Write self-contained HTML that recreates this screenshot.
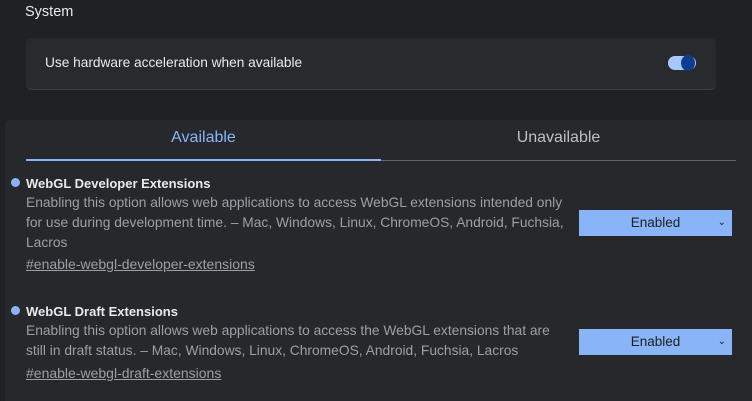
<!DOCTYPE html>
<html><head><style>
body{margin:0;width:752px;height:401px;background:#202124;font-family:"Liberation Sans",sans-serif;overflow:hidden;position:relative;color:#e8eaed}
.a{position:absolute}
.desc{color:#9aa0a6;font-size:13.8px;line-height:20px;white-space:nowrap}
.link{color:#9aa0a6;font-size:14px;text-decoration:underline}
.title{font-size:13px;font-weight:bold;color:#e8eaed}
.dot{width:9px;height:9px;border-radius:50%;background:#8ab4f8}
.sel{background:#8ab4f8;color:#202124;font-size:13.5px;width:153px;height:26px;line-height:26px;text-align:center}
.sel span{position:absolute;right:6px;top:0;font-size:10px}
</style></head><body>
<div class="a" style="left:25px;top:4px;font-size:14.5px">System</div>
<div class="a" style="left:26px;top:38px;width:690px;height:51px;background:#292a2d;border-radius:6px;border-bottom:1px solid #3c4043"></div>
<div class="a" style="left:45px;top:55px;font-size:13.7px">Use hardware acceleration when available</div>
<div class="a" style="left:668px;top:56px;width:28px;height:14px;border-radius:8px;background:#a8c7fa"></div>
<div class="a" style="left:681px;top:55px;width:14px;height:16px;border-radius:50%;background:#0b3d91"></div>
<div class="a" style="left:5px;top:120px;width:747px;height:281px;background:#27282b;border-radius:6px 0 0 0"></div>
<div class="a" style="left:26px;top:129px;width:355px;text-align:center;font-size:16px;color:#8ab4f8">Available</div>
<div class="a" style="left:381px;top:129px;width:355px;text-align:center;font-size:16px;color:#bdc1c6">Unavailable</div>
<div class="a" style="left:26px;top:159px;width:355px;height:2px;background:#8ab4f8"></div>
<div class="a" style="left:381px;top:160px;width:355px;height:1px;background:#5f6368"></div>

<div class="a dot" style="left:11px;top:178px"></div>
<div class="a title" style="left:26px;top:176px">WebGL Developer Extensions</div>
<div class="a desc" style="left:26px;top:193px">Enabling this option allows web applications to access WebGL extensions intended only<br>for use during development time. – Mac, Windows, Linux, ChromeOS, Android, Fuchsia,<br>Lacros</div>
<div class="a link" style="left:26px;top:256px">#enable-webgl-developer-extensions</div>
<div class="a sel" style="left:579px;top:210px">Enabled<span>⌄</span></div>

<div class="a dot" style="left:11px;top:306px"></div>
<div class="a title" style="left:26px;top:304px">WebGL Draft Extensions</div>
<div class="a desc" style="left:26px;top:321px">Enabling this option allows web applications to access the WebGL extensions that are<br>still in draft status. – Mac, Windows, Linux, ChromeOS, Android, Fuchsia, Lacros</div>
<div class="a link" style="left:26px;top:365px">#enable-webgl-draft-extensions</div>
<div class="a sel" style="left:579px;top:329px">Enabled<span>⌄</span></div>
</body></html>
